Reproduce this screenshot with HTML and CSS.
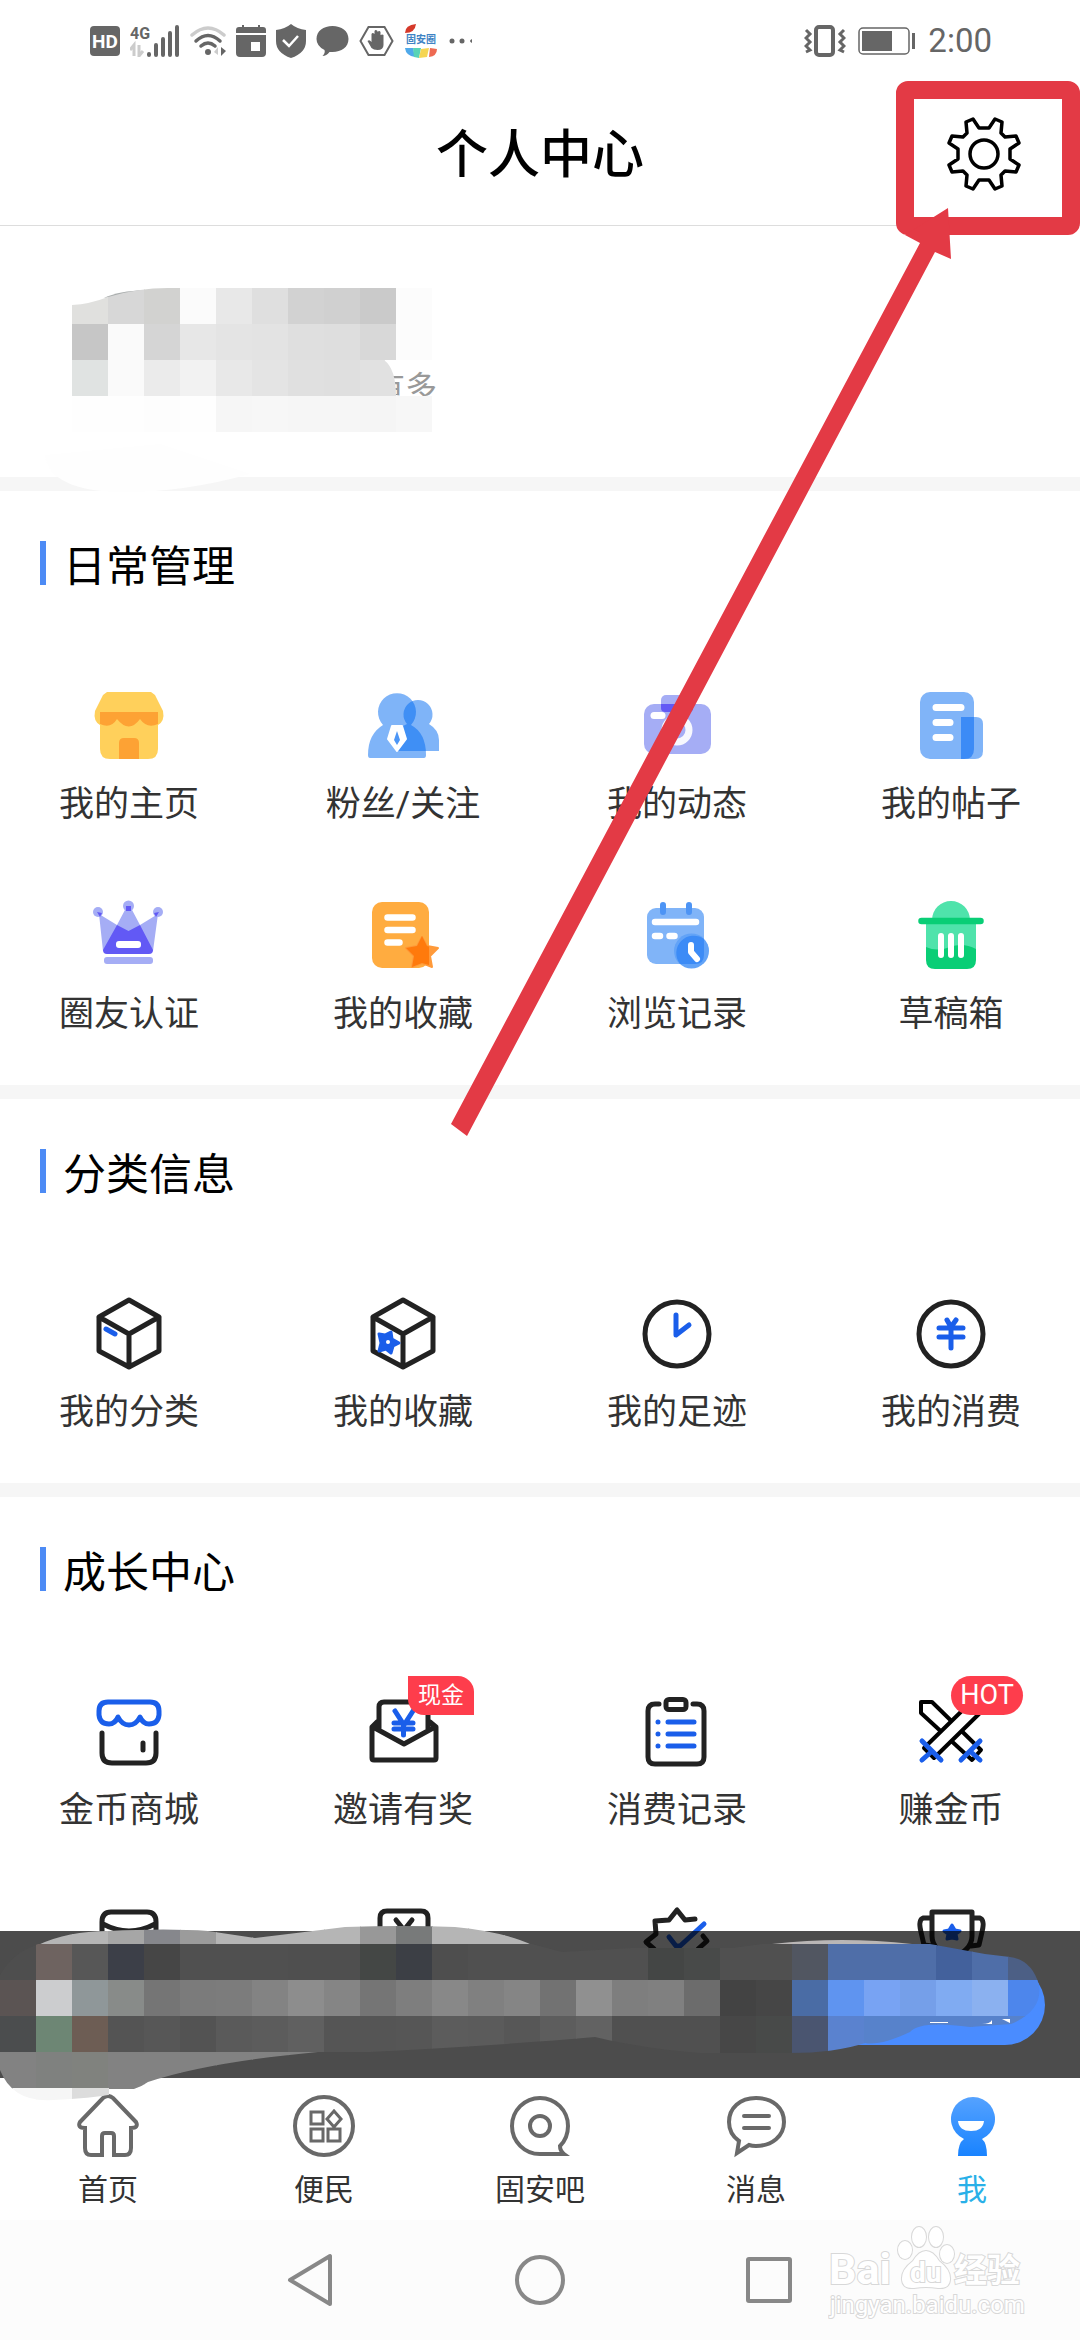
FILE: index.html
```html
<!DOCTYPE html>
<html lang="zh-CN">
<head>
    <meta charset="UTF-8">
    <meta name="viewport" content="width=device-width, initial-scale=1.0">
    <meta name="format-detection" content="telephone=no">
    <title>个人中心</title>
    <link rel="stylesheet" href="styles.css">
</head>
<body>
<div class="app">
    <div class="status-bar">
        <div class="status-left">
            <svg width="30" height="30" viewBox="0 0 30 30"><rect width="30" height="30" rx="4" fill="#666"/><text x="15" y="22" class="st-hd">HD</text></svg>
            <svg width="50" height="32" viewBox="0 0 50 32">
                <text x="0" y="14" class="st-4g">4G</text>
                <path d="M4 31V20l-4 5M9 20v11l4-5" stroke="#ccc" stroke-width="3" fill="none"/>
                <path d="M19 30v-1M26 30V20M33 30V14M40 30V8M47 30V2" stroke="#666" stroke-width="4" stroke-linecap="round"/>
            </svg>
            <svg width="36" height="32" viewBox="0 0 36 32" fill="none" stroke-width="3.5" stroke-linecap="round">
                <path d="M2 10Q18-4 34 10" stroke="#ccc"/>
                <path d="M6 16q12-11 24 0M11 21q7-6 14 0" stroke="#666"/>
                <circle cx="18" cy="27" r="3" fill="#666" stroke="none"/>
                <path d="M24 27l4-5v8z" fill="#ccc"/><path d="M31 22v9l5-5z" fill="#666"/>
            </svg>
            <svg width="30" height="32" viewBox="0 0 30 32" fill="#666"><path d="M3 2h24q3 0 3 3v3H0V5q0-3 3-3zM6 0h2v3H6zM22 0h2v3h-2zM0 10h30v18q0 4-4 4H4q-4 0-4-4z"/><path d="M15 17h9v9h-9z" fill="#fff"/></svg>
            <svg width="30" height="34" viewBox="0 0 30 34"><path d="M15 0q6 5 15 6v11q0 12-15 17Q0 29 0 17V6q9-1 15-6z" fill="#666"/><path d="M7 16l6 6 9-10" fill="none" stroke="#fff" stroke-width="2.500"/></svg>
            <svg width="33" height="30" viewBox="0 0 32 30"><path d="M16 0c9 0 16 5 16 13s-7 13-16 13l-3 0q-3 4-7 4q3-3 2-6Q0 20 0 13C0 5 7 0 16 0z" fill="#666"/></svg>
            <svg width="35" height="34" viewBox="0 0 34 34"><path d="M9 3h16l8 14-8 14H9L1 17z" fill="none" stroke="#666" stroke-width="2"/><path d="M12 24l-4-7q2-2 4 1V10q1-2 3 0V7q1-2 3 0v1q2-2 3 0v3q2-1 3 0v10q0 5-6 5-4 0-6-2z" fill="#666"/></svg>
            <svg width="34" height="34" viewBox="0 0 34 34">
                <path d="M1 9Q1 1 12 0q-1 9-11 9z" fill="#d5392a"/>
                <text x="17" y="19" class="st-app">固安圈</text>
                <path d="M1 24h8l2 9Q2 32 1 24z" fill="#4fa9ea"/><path d="M9 24h8l-2 10-5-1z" fill="#58d3b6"/><path d="M17 25l8-1-2 9-8 1z" fill="#f5d553"/><path d="M26 24l7 1q0 7-8 8z" fill="#ee6a52"/>
            </svg>
            <svg width="24" height="6" viewBox="0 0 24 6" fill="#666"><circle cx="4" cy="3" r="2.500"/><circle cx="14" cy="3" r="2.500"/><path d="M24 1v4q-4-2 0-4z"/></svg>
        </div>
        <div class="status-right">
            <svg width="42" height="32" viewBox="0 0 42 32" fill="none" stroke="#666"><rect x="12" y="2" width="17" height="28" rx="3" stroke-width="4"/><path d="M2 5l4 4-4 4 4 4-4 4 4 4-4 2M40 5l-4 4 4 4-4 4 4 4-4 4 4 2" stroke-width="3"/></svg>
            <svg width="58" height="28" viewBox="0 0 58 28"><rect x="1" y="1" width="50" height="26" rx="4" fill="none" stroke="#666" stroke-width="1.500"/><path d="M4 4h30v20H4zM54 6h3v16h-3z" fill="#666"/></svg>
            <span class="time">2:00</span>
        </div>
    </div>

    <div class="header">
        <h1>个人中心</h1>
        <button type="button" class="setting" aria-label="设置">
            <svg width="76" height="76" viewBox="-38 -38 76 76" fill="none" stroke="#000" stroke-width="3.500" stroke-linejoin="round">
                <circle r="14"/>
                <path d="M-5-26h10L11-35l7 3-1 11 4 4 11-1 3 7-9 6v10l9 6-3 7-11-1-4 4 1 11-7 3-6-9H-5l-6 9-7-3 1-11-4-4-11 1-3-7 9-6V-5l-9-6 3-7 11 1 4-4-1-11 7-3z"/>
            </svg>
        </button>
    </div>

    <div class="main">
        <div class="profile">
            <p>有多</p>
            <svg class="mosaic" viewBox="0 226 1080 280">
                <defs><clipPath id="clip-top"><path d="M72 305q18-1 36-8 30-9 60-9h228v72h-12q12 9 12 36v36H72z M396 288h36v72h-36z M396 396h36v36h-36z"/></clipPath></defs>
                <path d="M45 455q5 37 80 37 60 0 125-18l-90-30z" fill="#fefefe"/>
                <path d="M104 298q14-7 42-8l-20 5z" fill="#a9adad"/>
                <path d="M396 395q20 4 40-1v12h-40z" fill="#fff"/>
                <g id="mosaic-top" clip-path="url(#clip-top)"></g>
            </svg>
        </div>

        <div class="section">
            <h2>日常管理</h2>
            <div class="grid">
                <a href="#">
                    <svg viewBox="0 0 72 72"><path d="M14 2h44l4 3 8 16q2 10-5 14v24q0 10-10 10H17Q7 69 7 59V35Q0 31 2 21L10 5z" fill="#ffd05b"/><path d="M7 22h58v12q-11 5-18-5-11 15-23 0-6 10-17 5zM26 69V53q0-5 5-5h10q5 0 5 5v16z" fill="#fda234"/></svg>
                    <span>我的主页</span>
                </a>
                <a href="#">
                    <svg viewBox="0 0 72 72" fill="#0069f2"><path opacity=".5" d="M16 35a19 19 0 1 1 28 0q15 8 15 30 0 3-2 3H3q-2 0-2-3 0-21 15-30z"/><path opacity=".5" d="M40 34a14.500 14.500 0 1 1 22 0q10 6 10 16v11H31l-2-6 7-19z"/><path d="M25 36h10l4 13-9 12-9-12z" fill="#fff" stroke="#fff" stroke-width="2" stroke-linejoin="round"/><path opacity=".7" d="M30 41l3 9-3 5-3-5z"/></svg>
                    <span>粉丝/关注</span>
                </a>
                <a href="#">
                    <svg viewBox="0 0 72 72"><rect x="20" y="5" width="32" height="17" rx="5" fill="#a5adf5"/><rect x="3" y="14" width="67" height="50" rx="10" fill="#a5adf5"/><path d="M20 14h32v4q0 4-4 4H24q-4 0-4-4z" fill="#6259f5"/><circle cx="36" cy="40" r="12" fill="none" stroke="#f7f8fe" stroke-width="7"/><path d="M13 25.500h8" stroke="#fff" stroke-width="7" stroke-linecap="round"/></svg>
                    <span>我的动态</span>
                </a>
                <a href="#">
                    <svg viewBox="0 0 72 72"><rect x="5" y="2" width="54" height="67" rx="10" fill="#80b4f8"/><path d="M46 27h15q7 0 7 7v27q0 8-8 8H46z" fill="#80b4f8"/><path d="M46 27h13v32q0 10-10 10h-3z" fill="#3c8bf6"/><path d="M21 17.500h25M21 32.500h14M21 47.500h14" stroke="#fff" stroke-width="7" stroke-linecap="round"/></svg>
                    <span>我的帖子</span>
                </a>
                <a href="#">
                    <svg viewBox="0 0 72 72" fill="#a5adf5"><circle cx="5" cy="12" r="5"/><circle cx="35.500" cy="6" r="5.500"/><circle cx="65" cy="12" r="5"/><path d="M6 14l18 11L33 8h5l9 17 18-11-5 37H10z"/><path d="M24 25l11.500 6L47 25l13 25q0 4-4 4H14q-4 0-4-4z" fill="#6259f5"/><path d="M4 12l5 1-2 4zM33 6h5v5h-5zM66 12l-5 1 2 4z" fill="#6259f5"/><rect x="11" y="57" width="49" height="7" rx="3"/><rect x="23" y="41" width="25" height="7" rx="3" fill="#fff"/></svg>
                    <span>圈友认证</span>
                </a>
                <a href="#">
                    <svg viewBox="0 0 72 72"><rect x="5" y="2" width="57" height="66" rx="10" fill="#ffac40"/><path d="M20.500 17.500h25M20.500 30h25M20.500 42.500h12" stroke="#fff" stroke-width="6.500" stroke-linecap="round"/><path d="M55 37l5 9 11 2-8 8 2 11-10-4-10 4 2-11-8-8 11-2z" fill="#ff9a3a" stroke="#ff9a3a" stroke-width="2" stroke-linejoin="round"/><path d="M55 36l5 10 2 .5V65l-7-2-10 4 2-11-8-8 11-2z" fill="#ff7a0c"/></svg>
                    <span>我的收藏</span>
                </a>
                <a href="#">
                    <svg viewBox="0 0 72 72"><rect x="6" y="8" width="57" height="56" rx="9" fill="#80b4f8"/><path d="M22 5v7M48 5v7" stroke="#4d94f5" stroke-width="6" stroke-linecap="round"/><path d="M14 22h41M14 36h5M28.500 36h5" stroke="#fff" stroke-width="6.500" stroke-linecap="round"/><circle cx="50.500" cy="51" r="17.500" fill="#62a3f7"/><path d="M63 39v16q0 9-9 9H39a17.500 17.500 0 0 1 24-25z" fill="#3c8bf6"/><path d="M50 45v7l6 7" fill="none" stroke="#fff" stroke-width="6" stroke-linecap="round" stroke-linejoin="round"/></svg>
                    <span>浏览记录</span>
                </a>
                <a href="#">
                    <svg viewBox="0 0 72 72"><path d="M17 20a19 19 0 0 1 38 0zM11 22h50v34H11z" fill="#4fe3ab"/><path d="M11 47q11 5 24 0t26 2v11q0 9-9 9H20q-9 0-9-9z" fill="#09ce76"/><path d="M6.500 21h59" stroke="#09ce76" stroke-width="6.500" stroke-linecap="round"/><path d="M26 36v19M36 36v19M46 36v19" stroke="#fff" stroke-width="6" stroke-linecap="round"/></svg>
                    <span>草稿箱</span>
                </a>
            </div>
        </div>

        <div class="section">
            <h2>分类信息</h2>
            <div class="grid line-icons">
                <a href="#">
                    <svg viewBox="0 0 72 72"><path d="M36 2l30 17v34L36 69 6 53V19zM6 19l30 17 30-17M36 36v33"/><path class="blue" d="M13 31l9 5"/></svg>
                    <span>我的分类</span>
                </a>
                <a href="#">
                    <svg viewBox="0 0 72 72"><path d="M36 2l30 17v34L36 69 6 53V19zM6 19l30 17 30-17M36 36v33"/><path class="blue star" d="M12 36l6 1 6-3 1 7 7 4-6 3-2 7-5-4-7 2 2-8z"/><circle cx="21" cy="44" r="2" fill="#fff" stroke="none"/></svg>
                    <span>我的收藏</span>
                </a>
                <a href="#">
                    <svg viewBox="0 0 72 72"><circle cx="36" cy="36" r="32"/><path class="blue" d="M35 17v20l13-10"/></svg>
                    <span>我的足迹</span>
                </a>
                <a href="#">
                    <svg viewBox="0 0 72 72"><circle cx="36" cy="36" r="32"/><path class="blue" d="M32 22l4 7 5-7M24 30h24M24 39h24M36 29v21"/></svg>
                    <span>我的消费</span>
                </a>
            </div>
        </div>

        <div class="section">
            <h2>成长中心</h2>
            <div class="grid line-icons">
                <a href="#">
                    <svg viewBox="0 0 72 72"><path d="M9 37v20q0 10 10 10h34q10 0 10-10V37M50 47v7"/><path class="blue" d="M15 6h42q9 0 9 9v4q-1 9-10 9-6 0-9-7-4 8-11 8t-11-8q-3 7-9 7-9 0-10-9v-4q0-9 9-9z"/></svg>
                    <span>金币商城</span>
                </a>
                <a href="#">
                    <svg viewBox="0 0 72 72"><path d="M12 33V11q0-5 5-5h39q5 0 5 5v22M10 26l-5 5v31q0 2 2 2h60q2 0 2-2V31l-6-5M6 31l31 17 31-17"/><path class="blue" d="M28 15l9 14 9-14M27 27h19M27 33h19M36.500 28v11"/></svg>
                    <span>邀请有奖</span>
                    <em class="badge badge-cash">现金</em>
                </a>
                <a href="#">
                    <svg viewBox="0 0 72 72"><path d="M18 8h-4q-7 0-7 7v46q0 7 7 7h42q7 0 7-7V15q0-7-7-7h-4"/><rect x="25" y="3.500" width="20" height="10" rx="3"/><path class="blue" d="M17 26h0M27 26h26M17 38h0M27 38h26M17 50h0M27 50h26"/></svg>
                    <span>消费记录</span>
                </a>
                <a href="#">
                    <svg class="sword" viewBox="0 0 72 72"><path d="M6 6h11l49 48-9 10L6 17z"/><path d="M66 6H56L9 52l10 10 47-46z" fill="#fff"/><path class="blue" d="M7 45l19 19M7 64l9-8M65 45L46 64M65 64l-9-8"/></svg>
                    <span>赚金币</span>
                    <em class="badge badge-hot">HOT</em>
                </a>
                <a href="#">
                    <svg viewBox="0 0 72 72"><path d="M9 66V16Q9 6 18 6h36q9 0 9 10v50zM10 18q26 14 52 0"/></svg>
                </a>
                <a href="#">
                    <svg viewBox="0 0 72 72"><path d="M13 66V12q0-7 7-7h34q7 0 7 7v54zM29 14l8 10 8-10M37 24v12"/></svg>
                </a>
                <a href="#">
                    <svg viewBox="0 0 72 72"><path d="M54 13l-10 1-8-10-8 10-14 1 1 13-10 8 8 7 2 12 20 10 20-10 2-12 9-8-4-5"/><path class="blue" d="M28 31l7 9h4l24-22"/></svg>
                </a>
                <a href="#">
                    <svg viewBox="0 0 72 72"><path d="M17 6h40v24q0 14-20 22-20-8-20-22zM17 12H8q-5 2-2 14l3 13 8 1M57 12h8q5 2 2 14l-3 13-8 1"/><path class="blue star" d="M37 19l3 5 5 1-4 3 1 5-5-1-5 1 1-5-4-3 5-1z"/></svg>
                </a>
            </div>
        </div>

        <div class="promo">
            <button type="button" class="promo-btn"></button>
            <svg class="mosaic" viewBox="0 1901 1080 200">
                <defs>
                    <clipPath id="clip-a"><path d="M38 1945q30-14 70-14 60-3 100 0l47 7q50-6 90-11 60-2 110 0 50 5 77 18z"/></clipPath>
                    <clipPath id="clip-b"><path d="M0 1975q12-22 38-31h494l30 8 70-4 100 0 30-4h168l55 10 25 3q22 3 29 28 4 26-28 39l-41 3q-50-7-60 5-30 14-45 11-30 10-75 10h-90q-60-5-105-16-90 8-225 15H0z"/></clipPath>
                    <clipPath id="clip-c"><path d="M0 2052h318q-110 10-170 30-20 15-95 18-40 3-53-30z"/></clipPath>
                </defs>
                <g id="mosaic-a" clip-path="url(#clip-a)"></g>
                <g id="mosaic-b" clip-path="url(#clip-b)"></g>
                <g id="mosaic-c" clip-path="url(#clip-c)"></g>
                <path d="M772 1944q70-8 140 0z" fill="#b9b6b6"/>
                <path d="M930 2022h18v1h-18zM982 2024q8 0 10-4v4zM1002 2019h8v4z" fill="#fff"/>
            </svg>
        </div>
    </div>

    <div class="tabs">
        <a href="#">
            <svg viewBox="0 0 64 64"><path d="M27 4q5-4 10 0l23 24q3 6-5 6v20q0 7-6 7H38V42q0-3-3-3h-6q-3 0-3 3v19H15q-6 0-6-7V34q-8 0-5-6z"/></svg>
            <span>首页</span>
        </a>
        <a href="#">
            <svg viewBox="0 0 64 64"><circle cx="32" cy="32" r="29"/><path stroke-width="3" d="M19 18h12v12H19zM19 35h12v12H19zM36 35h12v12H36zM42 17l7 8-7 8-7-8z"/></svg>
            <span>便民</span>
        </a>
        <a href="#">
            <svg viewBox="0 0 64 64"><circle cx="32" cy="32" r="10"/><path d="M56 60H32A28 28 0 1 1 60 32q0 12-8 20 0 5 4 8z"/></svg>
            <span>固安吧</span>
        </a>
        <a href="#">
            <svg viewBox="0 0 64 64"><path d="M32 4c17 0 28 10 28 24S48 52 32 52q-4 0-7-1l-12 8 2-12Q5 40 5 28C5 14 16 4 32 4z"/><path d="M20 22h25M20 34h25" stroke-linecap="round"/></svg>
            <span>消息</span>
        </a>
        <a href="#" class="active">
            <svg viewBox="0 0 64 64">
                <defs><linearGradient id="me" x1="0" y1="0" x2="0" y2="1"><stop offset="0" stop-color="#55a2ff"/><stop offset="1" stop-color="#1983ff"/></linearGradient></defs>
                <path fill="url(#me)" stroke="none" d="M24 45a22 22 0 1 1 18 0q5 4 5 17H18q0-13 6-17z"/><path fill="#fff" stroke="none" d="M18 27h26q-1 10-13 10t-13-10z"/>
            </svg>
            <span>我</span>
        </a>
    </div>

    <div class="nav">
        <button type="button" aria-label="返回"><svg viewBox="0 0 54 54"><path d="M46 3v48L6 27z"/></svg></button>
        <button type="button" aria-label="主屏幕"><svg viewBox="0 0 54 54"><circle cx="27" cy="27" r="23"/></svg></button>
        <button type="button" aria-label="最近任务"><svg viewBox="0 0 54 54"><rect x="6" y="6" width="42" height="42" rx="1"/></svg></button>
        <svg class="watermark" width="200" height="104" viewBox="0 0 200 104">
            <ellipse cx="77" cy="30" rx="7" ry="9"/><ellipse cx="91" cy="17" rx="7" ry="10"/><ellipse cx="108" cy="17" rx="7" ry="10"/><ellipse cx="119" cy="34" rx="7" ry="9"/>
            <path d="M98 31q7 0 13 10 12 9 11 19-1 9-12 8-12-2-24 0-11 1-12-8-1-10 11-19 6-10 13-10z"/>
            <text x="1" y="64" class="wm-bai">Bai</text>
            <text x="82" y="62" class="wm-du">du</text>
            <text x="126" y="62" class="wm-cn">经验</text>
            <text x="2" y="93" class="wm-url">jingyan.baidu.com</text>
        </svg>
    </div>

    <!-- 标注 -->
    <svg class="mark" viewBox="0 0 1080 1140">
        <rect x="905" y="90" width="166" height="136" rx="3"/>
        <path d="M451 1124L920 243l-15-8 43-27 3 51-16-7L467 1136z"/>
    </svg>
</div>

<script src="mosaic.js"></script>
</body>
</html>
```

FILE: styles.css
```css
* {
    box-sizing: border-box;
    margin: 0;
    padding: 0;
}
body {
    font-family: Roboto, "Noto Sans CJK SC", sans-serif;
    background: #fff;
    color: #333;
}
a {
    color: inherit;
    text-decoration: none;
}
button {
    border: 0;
    background: none;
}
svg {
    display: block;
}
.app {
    position: relative;
    display: flex;
    flex-direction: column;
    height: 100vh;
    overflow: hidden;
}

/* 状态栏 */
.status-bar {
    display: flex;
    justify-content: space-between;
    align-items: center;
    height: 82px;
    padding: 0 88px 0 90px;
    color: #666;
}
.status-left {
    display: flex;
    align-items: center;
    gap: 10px;
}
.status-right {
    display: flex;
    align-items: center;
    gap: 12px;
}
.time {
    font-size: 33px;
    line-height: 40px;
}
.st-hd {
    font-size: 19px;
    font-weight: bold;
    fill: #fff;
    text-anchor: middle;
}
.st-4g {
    font-size: 16px;
    font-weight: bold;
    fill: #666;
}
.st-app {
    font-size: 10px;
    font-weight: bold;
    fill: #3f83c4;
    text-anchor: middle;
}

/* 标题 */
.header {
    display: grid;
    grid-template-columns: 1fr auto 1fr;
    align-items: center;
    height: 144px;
    padding: 0 58px;
    border-bottom: 1px solid #ddd;
}
.header h1 {
    grid-column: 2;
    padding-top: 5px;
    font-size: 52px;
    line-height: 72px;
    font-weight: 500;
    color: #000;
}
.setting {
    justify-self: end;
}

.main {
    position: relative;
    z-index: 1;
    flex: 1;
    min-height: 0;
    overflow: clip;
    overflow-clip-margin: 24px;
}
.mosaic {
    position: absolute;
    left: 0;
    top: 0;
    width: 100%;
}
.profile {
    position: relative;
    z-index: 1;
    height: 251px;
    padding: 138px 0 0 373px;
}
.profile p {
    font-size: 32px;
    line-height: 48px;
    color: #999;
}

/* 宫格 */
.section {
    border-top: 14px solid #f6f6f6;
    padding: 46px 49px 45px;
}
.section h2 {
    display: flex;
    align-items: flex-start;
    gap: 17px;
    margin: 0 -9px 93px;
    font-size: 43px;
    line-height: 60px;
    font-weight: normal;
    color: #000;
}
.section h2:before {
    content: '';
    width: 6px;
    height: 44px;
    margin-top: 4px;
    background: #4d8bf5;
}
.grid {
    display: grid;
    grid-template-columns: repeat(4, 160px);
    justify-content: space-between;
    row-gap: 70px;
}
.grid a {
    position: relative;
    display: flex;
    flex-direction: column;
    align-items: center;
    gap: 18px;
}
.grid a svg {
    width: 72px;
    height: 72px;
    overflow: visible;
}
.grid a span {
    font-size: 35px;
    line-height: 50px;
    white-space: nowrap;
}
.line-icons svg {
    fill: none;
    stroke: #222;
    stroke-width: 5;
    stroke-linejoin: round;
    stroke-linecap: round;
}
.line-icons .blue {
    stroke: #1a5eea;
    stroke-width: 5;
}
.line-icons .star {
    fill: #1a5eea;
    stroke-width: 3;
}
.line-icons .sword {
    stroke: #000;
    stroke-width: 4;
}
.badge {
    position: absolute;
    top: -20px;
    left: 85px;
    height: 39px;
    line-height: 39px;
    background: #fe3d4c;
    color: #fff;
    font-style: normal;
    text-align: center;
}
.badge-cash {
    width: 66px;
    border-radius: 0 16px 0 16px;
    font-size: 23px;
}
.badge-hot {
    left: 80px;
    width: 72px;
    border-radius: 20px;
    font-size: 27px;
}

/* 底部提示条 */
.promo {
    position: absolute;
    left: 0;
    right: 0;
    bottom: 0;
    display: flex;
    justify-content: flex-end;
    align-items: center;
    height: 147px;
    padding: 0 35px;
    background: rgba(0, 0, 0, .7);
}
.promo-btn {
    width: 240px;
    height: 80px;
    border-radius: 40px;
    background: #4a8cff;
}
.promo .mosaic {
    top: -30px;
}

/* 底部导航 */
.tabs {
    display: flex;
    height: 142px;
    padding-top: 16px;
    background: #fff;
}
.tabs a {
    flex: 1;
    display: flex;
    flex-direction: column;
    align-items: center;
    gap: 11px;
    font-size: 30px;
    line-height: 42px;
}
.tabs svg {
    width: 64px;
    height: 64px;
    fill: none;
    stroke: #696969;
    stroke-width: 4;
}
.tabs .active {
    color: #29b0e8;
}
.nav {
    position: relative;
    display: flex;
    justify-content: center;
    align-items: center;
    gap: 175px;
    height: 120px;
    background: #fcfcfc;
}
.nav button svg {
    width: 54px;
    height: 54px;
    fill: none;
    stroke: #888;
    stroke-width: 4;
    stroke-linejoin: round;
}
.watermark {
    position: absolute;
    top: 0;
    right: 52px;
    fill: #fff;
    stroke: #d8d8d8;
    stroke-width: 2;
    paint-order: stroke;
}
.watermark text {
    font-weight: bold;
}
.wm-bai {
    font-size: 43px;
}
.wm-du {
    font-size: 28px;
}
.wm-cn {
    font-size: 33px;
}
.watermark .wm-url {
    font-size: 24px;
    font-weight: normal;
}

.mark {
    position: absolute;
    left: 0;
    top: 0;
    z-index: 5;
    width: 100%;
    pointer-events: none;
    fill: #e33a45;
}
.mark rect {
    fill: none;
    stroke: #e33a45;
    stroke-width: 18;
    stroke-linejoin: round;
}
```

FILE: mosaic.js
```js
(function () {
    var SIZE = 36;

    // 每行: 起点x, y, 颜色列表
    function drawRow(id, x, y, colors) {
        var box = document.getElementById(id);
        colors = colors.split(' ');
        for (var i = 0; i < colors.length; i++) {
            var rect = document.createElementNS('http://www.w3.org/2000/svg', 'rect');
            rect.setAttribute('x', x + i * SIZE);
            rect.setAttribute('y', y);
            rect.setAttribute('width', SIZE + 1);
            rect.setAttribute('height', SIZE + 1);
            rect.setAttribute('fill', '#' + colors[i]);
            box.appendChild(rect);
        }
    }

    drawRow('mosaic-top', 72, 288, 'e0e0de d7d7d7 d2d2d0 fbfbfb e8e8e8 dfdfdf d2d2d2 d0d0d0 cacaca fcfcfc');
    drawRow('mosaic-top', 72, 324, 'c6c6c6 fafafa d5d5d5 e7e7e7 e4e4e4 e3e3e3 dfdfdf dedede d8d8d8 fcfcfc');
    drawRow('mosaic-top', 72, 360, 'e0e3e2 fafafa ebebeb f2f2f2 e8e8e8 e4e4e4 e0e0e0 dfdfdf e1e1e1');
    drawRow('mosaic-top', 72, 396, 'fefefe fefefe fdfdfd fefefe f6f6f6 f7f7f7 f6f6f6 f6f6f6 f5f5f5 f7f7f7');

    drawRow('mosaic-a', 36, 1908, 'b5b5b5 b5b5b5 a6a6a6 86878c 9b9b9b b5b5b5 b5b5b5 b5b5b5 b5b5b5 989898 787a7a b5b5b5 b5b5b5 b5b5b5');
    drawRow('mosaic-b', 0, 1944, '4e4e4e 6e6360 575757 3c3f48 464646 505050 505050 505050 4f4f4f 4f4f4f 444745 3c3f45 4e4e4e 505050 505050 505050 505050 505050 444645 484a49 505050 505050 515661 4f6ea8 4f6ea8 4f6ea8 43619c 4f6ea8 4c5f85 4c5f85');
    drawRow('mosaic-b', 0, 1980, '5b5453 cccdcf 8f9799 888b89 757575 7b7b7b 7c7c7c 838383 8d8d8d 858585 757575 7e7e7e 888888 808080 858585 727272 909090 7e7e7e 808080 6c6c6c 434343 464646 4a6ca5 5f94f0 78a3f3 759fe9 80abf2 8bb1f0 4d86ec');
    drawRow('mosaic-b', 0, 2016, '4b4d4e 6d8674 6d5d54 545454 575757 535353 5a5a5a 5c5c5c 606060 555555 555555 565656 5c5c5c 5b5b5b 575757 5d5d5d 626262 505050 505050 505050 474747 484a49 4a5570 5a82cf 5782cb 5782cb 5782cb 5782cb 5782cb');
    drawRow('mosaic-c', 0, 2052, '828282 7f817f 80827e 828282 828282 828282 828282 828282 828282');
    drawRow('mosaic-c', 0, 2088, 'f6f6f6 f6f6f6 dcdcdc');
})();
```
